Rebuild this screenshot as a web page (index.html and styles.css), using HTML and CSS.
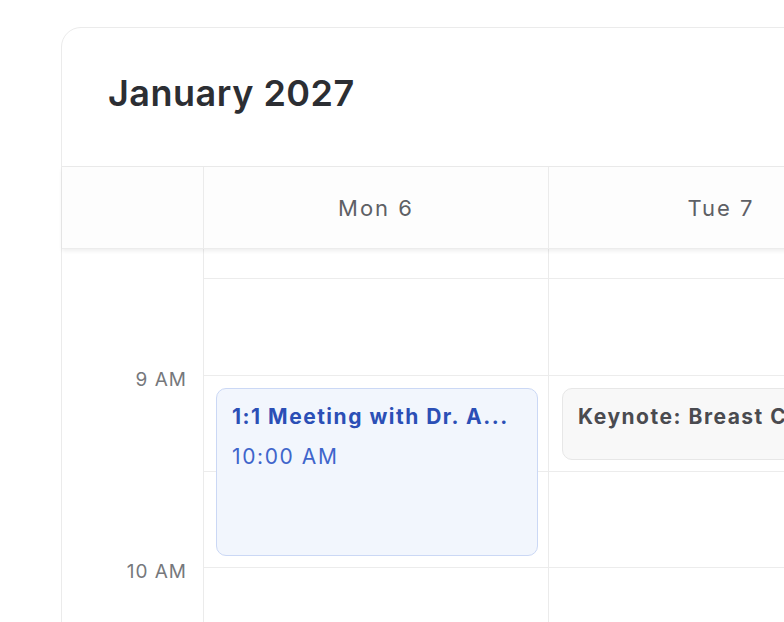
FILE: index.html
```html
<!DOCTYPE html>
<html>
<head>
<meta charset="utf-8">
<link rel="stylesheet" href="styles.css">
</head>
<body>
<div class="card">
  <header class="card-head">
    <h1 class="title">January 2027</h1>
  </header>
  <div class="day-head">
    <div class="corner"></div>
    <div class="day-name">Mon 6</div>
    <div class="day-name">Tue 7</div>
  </div>
  <div class="grid-body">
    <div class="times">
      <div class="time-label">9 AM</div>
      <div class="time-label">10 AM</div>
    </div>
    <div class="day-col">
      <div class="slot slot-first"></div>
      <div class="slot slot-second"></div>
      <div class="slot"></div>
      <div class="slot"></div>
      <div class="event event-blue ev-mon">
        <div class="ev-title">1:1 Meeting with Dr. A...</div>
        <div class="ev-time">10:00 AM</div>
      </div>
    </div>
    <div class="day-col">
      <div class="slot slot-first"></div>
      <div class="slot slot-second"></div>
      <div class="slot"></div>
      <div class="slot"></div>
      <div class="event event-gray ev-tue">
        <div class="ev-title">Keynote: Breast Cancer Research Advances</div>
      </div>
    </div>
  </div>
</div>
</body>
</html>
```

FILE: styles.css
```css
html, body {
  margin: 0;
  padding: 0;
  background: #ffffff;
  overflow: hidden;
  height: 622px;
}
body {
  font-family: Inter, "Open Sans", sans-serif;
}
.card {
  margin: 27px 0 0 61px;
  width: 1000px;
  height: 800px;
  border: 1px solid #ebebeb;
  border-radius: 20px;
  background: #fff;
  box-sizing: border-box;
}
.card-head {
  height: 138px;
  display: flex;
  align-items: center;
  padding-left: 46px;
  border-bottom: 1px solid #ebebeb;
}
.title {
  margin: 0 0 8px 0;
  font-size: 36px;
  font-weight: 600;
  letter-spacing: 0.5px;
  color: #2c2e33;
}
.day-head {
  display: grid;
  grid-template-columns: 142px 345px 345px;
  height: 81px;
  position: relative;
  z-index: 1;
  background: #fdfdfd;
  box-shadow: 0 2px 4px rgba(0,0,0,0.07);
  border-bottom: 1px solid #ececec;
}
.corner { border-right: 1px solid #ebebeb; }
.day-name {
  display: flex;
  align-items: center;
  justify-content: center;
  font-size: 22px;
  letter-spacing: 2px;
  color: #5e6065;
  border-right: 1px solid #ebebeb;
  padding-top: 1px;
}
.grid-body {
  display: grid;
  grid-template-columns: 142px 345px 345px;
}
.times {
  border-right: 1px solid #ebebeb;
  padding-top: 121px;
  display: flex;
  flex-direction: column;
}
.time-label {
  height: 192px;
  text-align: right;
  padding-right: 16px;
  font-size: 19px;
  line-height: 20px;
  letter-spacing: 1px;
  color: #76787c;
}
.day-col {
  position: relative;
  border-right: 1px solid #ebebeb;
}
.slot {
  height: 96px;
  border-bottom: 1px solid #ececec;
  box-sizing: border-box;
}
.slot-first { height: 30px; }
.slot-second { height: 97px; }
.event {
  position: absolute;
  box-sizing: border-box;
  border-radius: 10px;
  padding: 15px 15px;
  overflow: hidden;
}
.event-blue {
  background: #f2f6fd;
  border: 1.5px solid #cbd8f5;
}
.event-gray {
  background: #f8f8f8;
  border: 1.5px solid #e7e7e7;
}
.ev-mon { left: 12px; top: 139px; width: 322px; height: 168px; }
.ev-tue { left: 13px; top: 139px; width: 400px; height: 72px; }
.ev-title {
  font-size: 21px;
  font-weight: 700;
  line-height: 26px;
  white-space: nowrap;
  letter-spacing: 1.5px;
}
.event-blue .ev-title { color: #2b4fb6; }
.event-gray .ev-title { color: #4a4b50; }
.ev-time {
  margin-top: 14px;
  font-size: 21px;
  line-height: 26px;
  letter-spacing: 1.6px;
  color: #3f65cb;
}
```
